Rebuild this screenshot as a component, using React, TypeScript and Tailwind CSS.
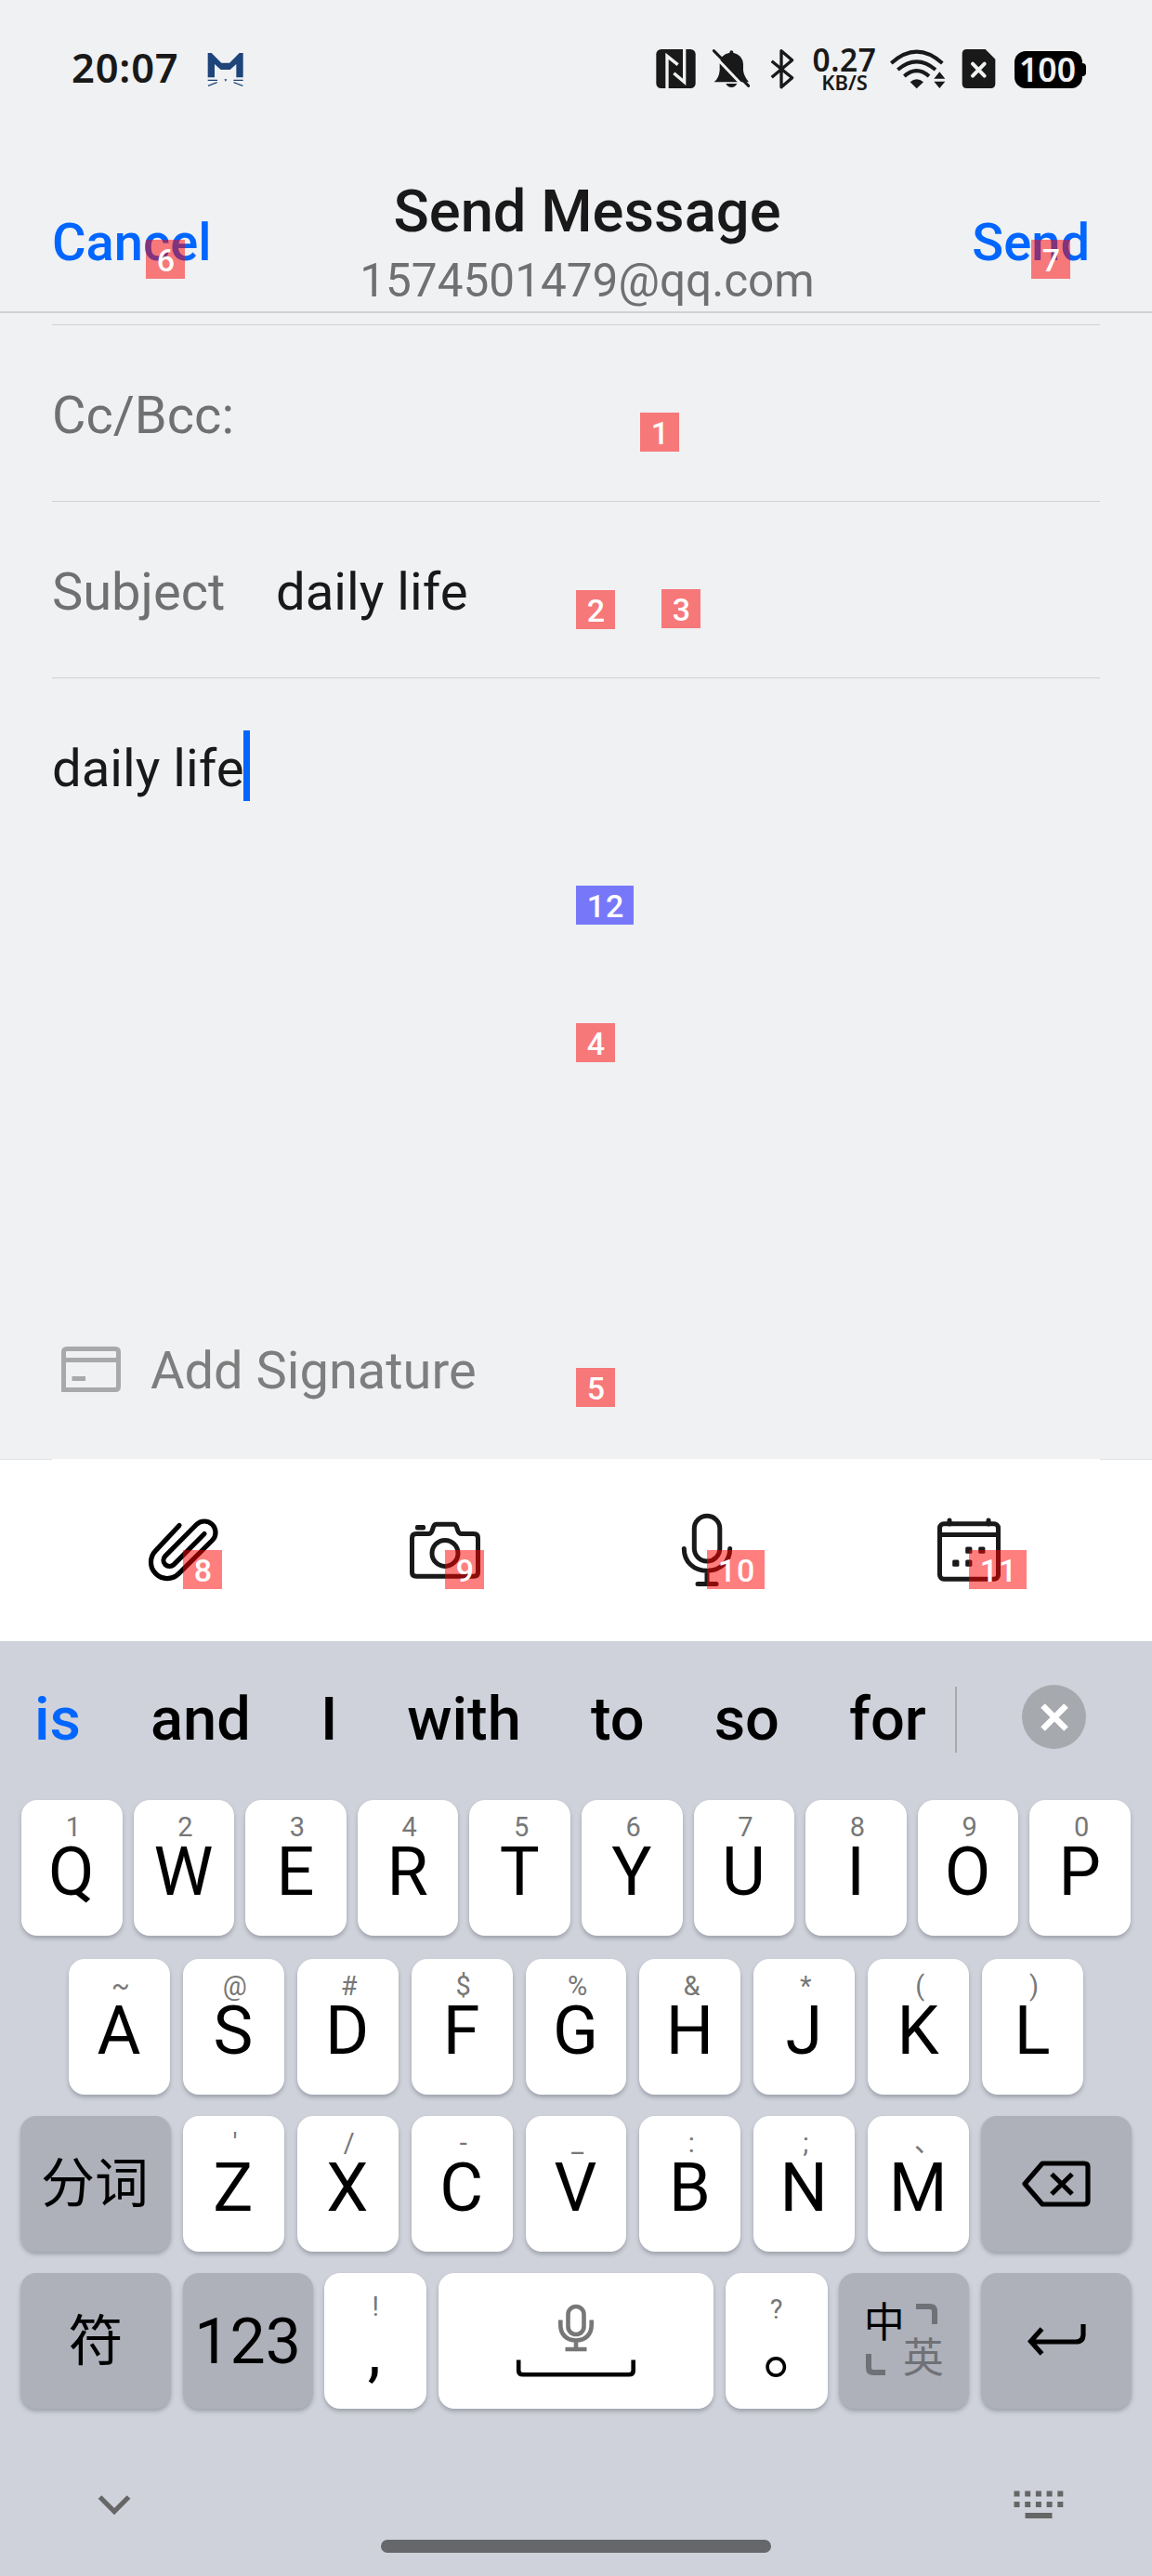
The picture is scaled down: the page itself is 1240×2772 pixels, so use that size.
import type { ReactNode } from "react";

const row1: [string, string][] = [["Q", "1"], ["W", "2"], ["E", "3"], ["R", "4"], ["T", "5"], ["Y", "6"], ["U", "7"], ["I", "8"], ["O", "9"], ["P", "0"]];
const row2: [string, string][] = [["A", "~"], ["S", "@"], ["D", "#"], ["F", "$"], ["G", "%"], ["H", "&"], ["J", "*"], ["K", "("], ["L", ")"]];
const row3: [string, string][] = [["Z", "'"], ["X", "/"], ["C", "-"], ["V", "_"], ["B", ":"], ["N", ";"], ["M", "、"]];

const keyBase = "h-[146px] rounded-[17px] shadow-[0_3px_4px_rgba(60,64,80,0.32)] shrink-0";

function LetterKey({ letter, hint }: { letter: string; hint: string }) {
  return (
    <div className="flex h-[146px] min-w-0 flex-1 flex-col items-center rounded-[17px] bg-white pt-[15px] shadow-[0_3px_4px_rgba(60,64,80,0.32)]">
      <span className={hint === "、" ? "ml-[20px] h-[29px] text-[29px] leading-none text-[#777]" : "ml-[3px] h-[29px] text-[29px] leading-none text-[#777]"}>{hint}</span>
      <span className="-mt-[2px] -ml-px h-[72px] text-[72px] leading-none text-black">{letter}</span>
    </div>
  );
}

function GreyKey({ className, children }: { className: string; children: ReactNode }) {
  return (
    <div className={`${keyBase} flex items-center justify-center bg-[#aeb1ba] text-black ${className}`}>{children}</div>
  );
}

function Badge({ n, className }: { n: number; className: string }) {
  return (
    <div className={`absolute flex h-[42px] items-center justify-center pt-px pl-[2px] text-[34px] leading-none font-medium tracking-[1px] text-white ${className}`}>
      {n}
    </div>
  );
}

function StatusIcons() {
  return (
    <div className="flex h-[60px] text-[#191919]">
      <svg className="w-[44px]" viewBox="18 0 132 180">
        <rect x="19" y="24" width="127" height="126" rx="16" fill="#191919" />
        <path d="M54 150V46L89 74M110 24V130L76 101" fill="none" stroke="#eff1f3" strokeWidth="10" />
      </svg>
      <svg className="ml-[16px] w-[44px]" viewBox="198 0 132 180">
        <path d="M206 130Q222 116 224 92V72Q226 40 256 35Q256 28 262 28Q268 28 268 35Q298 42 300 72V92Q302 110 318 130Z" fill="#191919" />
        <path d="M244 135H280Q274 147 262 147Q250 147 244 135Z" fill="#191919" />
        <path d="M196 34L310 154" stroke="#eff1f3" strokeWidth="9" />
        <path d="M205 29L317 142" stroke="#191919" strokeWidth="9" strokeLinecap="round" />
      </svg>
      <svg className="ml-[19px] w-[28px]" viewBox="388 0 84 180">
        <path d="M393 62L459 116L424 146V29L459 59L393 115" fill="none" stroke="#191919" strokeWidth="10" strokeLinejoin="round" />
      </svg>
      <div className="ml-[16px] flex w-[72px] flex-col items-center font-['Noto_Sans'] font-semibold">
        <span className="mt-[2px] h-[34px] text-[33.500px] leading-[34px] tracking-[0.6px]">0.27</span>
        <span className="-mt-[5px] h-[24px] text-[22px] leading-[24px]">KB/S</span>
      </div>
      <svg className="ml-[12px] w-[62px]" viewBox="770 0 186 180">
        <g fill="none" stroke="#191919" strokeWidth="12">
          <path d="M777 69Q859 -5 942 69" />
          <path d="M798 90Q859 38 920 90" />
          <path d="M819 111Q859 76 899 111" />
        </g>
        <path d="M838 130Q859 112 881 130L859 151Z" fill="#191919" />
        <path d="M933 97L951 119H915ZM933 150L951 128H915Z" fill="#191919" />
      </svg>
      <svg className="ml-[16px] w-[38px]" viewBox="1003 0 114 180">
        <path d="M1020 24H1080L1112 56V135Q1112 150 1097 150H1020Q1005 150 1005 135V39Q1005 24 1020 24Z" fill="#191919" />
        <path d="M1039 71L1077 110M1077 71L1039 110" stroke="#eff1f3" strokeWidth="12" strokeLinecap="round" />
      </svg>
      <div className="mt-[10px] ml-[19px] flex h-[40px] w-[73px] items-center justify-center rounded-[12px] bg-black pr-[2px] font-['Noto_Sans'] text-[35.500px] leading-none font-semibold text-[#eff1f3]">
        100
      </div>
      <div className="mt-[23px] h-[14px] w-[4px] rounded-r-[4px] bg-black" />
    </div>
  );
}

export default function App() {
  return (
    <div className="relative flex h-[2772px] w-[1240px] flex-col overflow-hidden bg-[#eff1f3] font-['Roboto','Noto_Sans_CJK_SC',sans-serif] text-[#191919]">
      <div className="flex h-[105px] items-start pt-[45px]">
        <span className="ml-[77px] w-[146px] font-['Noto_Sans'] text-[43.500px] leading-[55px] font-[650] tracking-[0.8px]">20:07</span>
        <svg className="h-[60px] w-[40px]" viewBox="460 0 120 180">
          <path d="M462 36H474L506 68H532L564 36H576V115H554V72L534 90H504L484 72V115H462Z" fill="#1f4479" />
          <path d="M462 124H493M545 124H576M463 142L492 131M575 142L546 131" stroke="#1f4479" strokeWidth="3.5" />
          <path d="M515 121H524L519.500 128Z" fill="#1f4479" />
        </svg>
        <div className="ml-[443px]">
          <StatusIcons />
        </div>
      </div>

      <header className="flex h-[232px] shrink-0 border-b-2 border-[#d1d2d4] leading-none">
        <div className="w-[300px] pt-[128px] pl-[56px] text-[56px] font-medium text-[#0066ff]">Cancel</div>
        <div className="flex flex-1 flex-col items-center">
          <h1 className="mt-[90px] h-[64px] text-[63.300px] leading-[64px] font-medium">Send Message</h1>
          <p className="mt-[19px] text-[49.500px] text-[#6f7070]">1574501479@qq.com</p>
        </div>
        <div className="w-[276px] pt-[128px] pr-[67px] text-right text-[56px] font-medium text-[#0066ff]">Send</div>
      </header>

      <main className="mx-[56px] flex h-[1233px] shrink-0 flex-col pt-[12px] text-[56px] leading-none">
        <div className="flex h-[191px] shrink-0 items-center border-y border-[#d1d2d4] pt-[5px] text-[#6f7070]">Cc/Bcc:</div>
        <div className="flex h-[190px] shrink-0 items-center border-b border-[#d1d2d4] pt-[5px]">
          <span className="w-[241px] text-[#6f7070]">Subject</span>
          <span className="text-[56.300px]">daily life</span>
        </div>
        <div className="flex h-[670px] items-start pt-[56px]">
          <span className="w-[206px] pt-[13px] text-[56.300px] whitespace-nowrap">daily life</span>
          <span className="h-[76px] w-[7px] bg-[#0066ff]" />
        </div>
        <div className="flex h-[170px] items-center pb-[20px] text-[#7d7e7e]">
          <svg className="-mt-[3px] ml-[10px] h-[49px] w-[64px]" viewBox="66 1449 64 49">
            <path d="M68.500 1495.500V1455Q68.500 1451.500 72 1451.500H124Q127.500 1451.500 127.500 1455V1492Q127.500 1495.500 124 1495.500ZM68.500 1463.500H127.500M77.500 1483.500H92" fill="none" stroke="#a8a9aa" strokeWidth="5" />
          </svg>
          <span className="ml-[32px]">Add Signature</span>
        </div>
      </main>

      <div className="flex h-px shrink-0 justify-between bg-white">
        <div className="h-px w-[56px] bg-[#e3e5e7]" />
        <div className="h-px w-[56px] bg-[#e3e5e7]" />
      </div>
      <div className="grid h-[195px] shrink-0 grid-cols-4 items-center bg-white px-[56px] pb-px">
        <svg className="mx-auto h-[84px] w-[84px]" viewBox="155 1626 84 84" fill="none" stroke="#000" strokeWidth="5.200" strokeLinecap="round">
          <path d="M193 1641.500L167.600 1668.600A17.500 17.500 0 0 0 192.400 1693.400L228.500 1657.500A12 12 0 0 0 211.500 1640.500L177.900 1674.400A6.500 6.500 0 0 0 187.100 1683.600L220 1650.500" />
        </svg>
        <svg className="mx-auto h-[84px] w-[84px]" viewBox="437 1626 84 84" fill="none" stroke="#191919" strokeWidth="5">
          <path d="M448 1650.500H461Q464 1650.500 465 1647.500L466.500 1643Q467.500 1640.300 470 1640.300H488Q490.500 1640.300 491.500 1643L493 1647.500Q494 1650.500 497 1650.500H510Q514.500 1650.500 514.500 1655V1692Q514.500 1696.300 510 1696.300H448Q443.500 1696.300 443.500 1692V1655Q443.500 1650.500 448 1650.500Z" />
          <circle cx="479" cy="1671.400" r="14" />
          <rect x="447" y="1641" width="11" height="5.500" rx="2" fill="#191919" stroke="none" />
        </svg>
        <svg className="mx-auto h-[84px] w-[84px]" viewBox="719 1626 84 84" fill="none" stroke="#191919" strokeWidth="5" strokeLinecap="round">
          <rect x="747.300" y="1631.200" width="27.500" height="48.800" rx="13.700" />
          <path d="M736.300 1666.500C736.300 1681 747 1690.200 761 1690.200S785.700 1681 785.700 1666.500M761 1691V1704M751 1704.500H771" />
        </svg>
        <svg className="mx-auto h-[84px] w-[84px]" viewBox="1001 1626 84 84" fill="none" stroke="#191919" strokeWidth="5">
          <rect x="1011.500" y="1639.800" width="63" height="59.500" rx="4.500" />
          <path d="M1011 1651.500H1075" />
          <path d="M1022 1636V1640M1064 1636V1640" strokeLinecap="round" />
          <g fill="#191919" stroke="none">
            <rect x="1039.200" y="1664.500" width="7.200" height="7.200" rx="1.500" />
            <rect x="1053.200" y="1664.500" width="7.200" height="7.200" rx="1.500" />
            <rect x="1025.200" y="1678.500" width="7.200" height="7.200" rx="1.500" />
            <rect x="1039.200" y="1678.500" width="7.200" height="7.200" rx="1.500" />
          </g>
        </svg>
      </div>

      <section className="flex h-[1006px] shrink-0 flex-col bg-[#cfd2da]">
        <div className="flex h-[171px] shrink-0">
          <div className="flex w-[1028px] gap-[75px] pt-[52px] pl-[37px] text-[65px] leading-none font-medium text-black">
            <span className="text-[#0066ff]">is</span>
            <span>and</span>
            <span>I</span>
            <span>with</span>
            <span>to</span>
            <span>so</span>
            <span>for</span>
          </div>
          <div className="mt-[49px] h-[71px] w-[2px] bg-[#a6a9ae]" />
          <div className="mt-[47px] ml-[70px] flex h-[69px] w-[69px] items-center justify-center rounded-full bg-[#a6a9ae]">
            <svg className="h-[30px] w-[30px]" viewBox="0 0 30 30" stroke="#fff" strokeWidth="6.500">
              <path d="M2.500 2.500L27.500 27.500M27.500 2.500L2.500 27.500" />
            </svg>
          </div>
        </div>

        <div className="flex gap-[12px] px-[23px]">
          {row1.map(([l, h]) => <LetterKey key={l} letter={l} hint={h} />)}
        </div>
        <div className="mt-[25px] flex gap-[14px] px-[74px]">
          {row2.map(([l, h]) => <LetterKey key={l} letter={l} hint={h} />)}
        </div>
        <div className="mt-[23px] flex gap-[13px] px-[22px]">
          <GreyKey className="w-[162px] pr-[2px] text-[58px]">分词</GreyKey>
          <div className="flex flex-1 gap-[14px]">
            {row3.map(([l, h]) => <LetterKey key={l} letter={l} hint={h} />)}
          </div>
          <GreyKey className="w-[162px]">
            <svg className="h-[50px] w-[74px]" viewBox="1101 2324.500 74 50" fill="none" stroke="#000" strokeWidth="5.200" strokeLinejoin="round">
              <path d="M1104 2349.500L1123 2327.500H1168Q1172 2327.500 1172 2331V2368Q1172 2371.500 1168 2371.500H1123ZM1133 2339L1155 2360.500M1155 2339L1133 2360.500" />
            </svg>
          </GreyKey>
        </div>
        <div className="mt-[23px] flex justify-between px-[22px]">
          <GreyKey className="w-[162px] pt-[2px] text-[59px]">符</GreyKey>
          <GreyKey className="w-[140px] pt-[1px] text-[68px]">123</GreyKey>
          <div className={`${keyBase} flex w-[110px] flex-col items-center bg-white pt-[22px] leading-none`}>
            <span className="h-[29px] text-[29px] text-[#777]">!</span>
            <span className="-mt-[2px] -ml-[3px] h-[72px] text-[72px] text-black">,</span>
          </div>
          <div className={`${keyBase} flex w-[296px] flex-col items-center bg-white pt-[32px]`}>
            <svg className="h-[54px] w-[42px]" viewBox="599 2478 42 54" fill="none" stroke="#777" strokeWidth="4.600">
              <rect x="611.500" y="2482" width="17" height="30" rx="8.500" />
              <path d="M603.300 2496.500V2502C603.300 2512 610 2518.500 620 2518.500S636.700 2512 636.700 2502V2496.500M620 2518.500V2528M608.500 2528H631.500" />
            </svg>
            <svg className="mt-[6px] h-[20px] w-[130px]" viewBox="555 2538 130 20" fill="none" stroke="#000" strokeWidth="4.600">
              <path d="M558.200 2539.500V2551Q558.200 2555.300 563 2555.300H677Q681.700 2555.300 681.700 2551V2539.500" />
            </svg>
          </div>
          <div className={`${keyBase} flex w-[110px] flex-col items-center bg-white pt-[25px] leading-none`}>
            <span className="h-[29px] text-[29px] text-[#777]">?</span>
            <span className="-mt-[7px] ml-[43px] h-[72px] w-[72px] text-[72px] text-black">。</span>
          </div>
          <GreyKey className="w-[140px]">
            <div className="grid grid-cols-2 gap-x-[1px] text-[44px] leading-[40px]">
              <span className="mt-[2px] -ml-[1px] h-[39px] w-[42px] text-black">中</span>
              <svg className="ml-[12px] h-[24px] w-[24px]" viewBox="0 0 24 24" fill="none" stroke="#707177" strokeWidth="6"><path d="M0 4H15Q20 4 20 9V23" /></svg>
              <svg className="mt-[14px] ml-[1px] h-[24px] w-[24px]" viewBox="0 0 24 24" fill="none" stroke="#707177" strokeWidth="6"><path d="M3 0V15Q3 20 8 20H21" /></svg>
              <span className="-mt-[1px] -ml-[2px] h-[43px] w-[44px] text-[#707177]">英</span>
            </div>
          </GreyKey>
          <GreyKey className="w-[162px]">
            <svg className="h-[46px] w-[64px]" viewBox="1105 2496 64 46" fill="none" stroke="#000" strokeWidth="5.200">
              <path d="M1166 2501V2512Q1166 2520 1158 2520H1110M1121.500 2506L1109.500 2519.500L1121.500 2533" />
            </svg>
          </GreyKey>
        </div>

        <div className="mt-[84px] flex justify-between pr-[95px] pl-[104px]">
          <svg className="mt-[6px] h-[26px] w-[38px]" viewBox="104 2682 38 26" fill="none" stroke="#666" strokeWidth="5.200">
            <path d="M107.500 2687L123 2702.500L138.500 2687" />
          </svg>
          <svg className="mt-[4px] h-[30px] w-[54px]" viewBox="1091 2680 54 30" fill="#666">
            {[0, 1, 2, 3, 4].map((i) => (
              <g key={i}>
                <rect x={1091.500 + i * 11.700} y="2680.500" width="6" height="6" />
                <rect x={1091.500 + i * 11.700} y="2692" width="6" height="6" />
              </g>
            ))}
            <rect x="1103.500" y="2704" width="29" height="6" />
          </svg>
        </div>
        <div className="mx-auto mt-[23px] h-[14px] w-[420px] rounded-full bg-[#66676b]" />
      </section>

      <Badge n={1} className="top-[444px] left-[689px] w-[42px] bg-[#ff0000]/50" />
      <Badge n={2} className="top-[635px] left-[620px] w-[42px] bg-[#ff0000]/50" />
      <Badge n={3} className="top-[634px] left-[712px] w-[42px] bg-[#ff0000]/50" />
      <Badge n={4} className="top-[1101px] left-[620px] w-[42px] bg-[#ff0000]/50" />
      <Badge n={5} className="top-[1472px] left-[620px] w-[42px] bg-[#ff0000]/50" />
      <Badge n={6} className="top-[258px] left-[157px] w-[42px] bg-[#ff0000]/50" />
      <Badge n={7} className="top-[258px] left-[1110px] w-[42px] bg-[#ff0000]/50" />
      <Badge n={8} className="top-[1668px] left-[197px] w-[42px] bg-[#ff0000]/50" />
      <Badge n={9} className="top-[1668px] left-[479px] w-[42px] bg-[#ff0000]/50" />
      <Badge n={10} className="top-[1668px] left-[761px] w-[62px] bg-[#ff0000]/50" />
      <Badge n={11} className="top-[1668px] left-[1043px] w-[62px] bg-[#ff0000]/50" />
      <Badge n={12} className="top-[953px] left-[620px] w-[62px] bg-[#0000ff]/50" />
    </div>
  );
}
